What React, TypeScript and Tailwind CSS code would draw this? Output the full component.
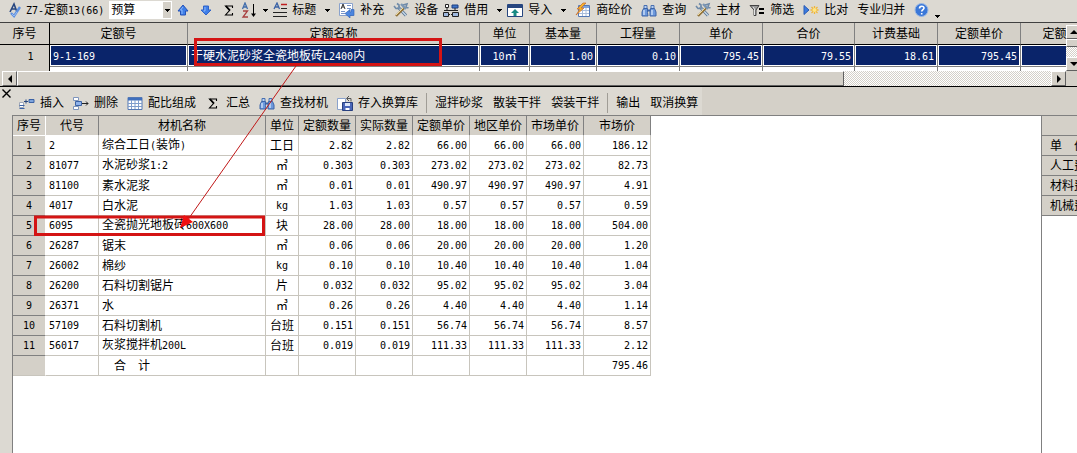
import { Fragment, ReactNode } from "react";

const checker =
  "bg-[repeating-conic-gradient(#ffffff_0_25%,#d4d0c8_0_50%)] bg-[length:2px_2px]";
const raised =
  "flex items-center justify-center bg-[#d4d0c8] border border-t-white border-l-white border-r-[#606060] border-b-[#606060]";

// Latin runs are set in a narrow mono face so that they take half a CJK cell
const Txt = ({ children }: { children: string }) => (
  <span className="whitespace-pre">
    {children.split(/([\x20-\x7e]+)/).map((part, i) =>
      i % 2 ? (
        <span key={i} className="font-['DejaVu_Sans_Mono',monospace] text-[10px]">
          {part}
        </span>
      ) : (
        <Fragment key={i}>{part}</Fragment>
      )
    )}
  </span>
);

const Caret = () => (
  <svg width="5" height="3" viewBox="0 0 5 3" shapeRendering="crispEdges">
    <path d="M0 0h5L2.5 3z" />
  </svg>
);

const Triangle = ({ dir }: { dir: "left" | "right" | "up" | "down" }) => {
  const d = {
    left: "M6 0v8L2 4z",
    right: "M2 0v8l4-4z",
    up: "M0 6h8L4 2z",
    down: "M0 2h8L4 6z",
  }[dir];
  return (
    <svg width="8" height="8" viewBox="0 0 8 8" className="shrink-0">
      <path d={d} />
    </svg>
  );
};

const Svg = ({ children, w = 16 }: { children: ReactNode; w?: number }) => (
  <svg width={w} height="16" viewBox={`0 0 ${w} 16`} fill="none" className="shrink-0">
    {children}
  </svg>
);

const SpellIcon = () => (
  <Svg w={14}>
    <path d="M2 10L6 2l3 8M4 7h4" stroke="#27467f" strokeWidth="1.6" />
    <path d="M3 11l3 3 6-9" stroke="#5b8fe0" strokeWidth="2.4" />
    <path d="M4 12l2 2 3-4" stroke="#9dbdf0" />
  </Svg>
);

const UpIcon = () => (
  <Svg w={12}>
    <path d="M6 3l5 6H8.500v4h-5V9H1z" fill="#3f7fe8" stroke="#2553b8" />
    <path d="M6 5L3.500 8H5v4" stroke="#8db8fa" />
  </Svg>
);

const DownIcon = () => (
  <Svg w={12}>
    <path d="M6 13l5-5H8.500V4h-5v4H1z" fill="#3f7fe8" stroke="#2f62c8" />
    <path d="M5 5v4H3.500" stroke="#8db8fa" />
  </Svg>
);

const SigmaIcon = ({ w = 12 }: { w?: number }) => (
  <Svg w={w}>
    <g transform={w > 12 ? "translate(2 0)" : undefined}>
      <path d="M9.500 6V4H2.500L6.500 8.500 2.500 13H9.500V11" stroke="#000" strokeWidth="1.100" />
      <path d="M3 4l4 4.500" stroke="#000" strokeWidth="1.800" />
    </g>
  </Svg>
);

const SortIcon = () => (
  <Svg>
    <path d="M2.500 7L5 1l2.500 6M3.500 5h3" stroke="#3f6cab" strokeWidth="1.300" />
    <path d="M3 9h4.500L3 15h5" stroke="#a84040" strokeWidth="1.300" />
    <path d="M13.500 2v11" stroke="#000" />
    <path d="M11 11.500h5l-2.500 3.500z" fill="#000" />
  </Svg>
);

const TitleIcon = () => (
  <Svg w={14}>
    <path d="M1 7l3-6 2.500 6M2.500 5h3" stroke="#3a62a5" strokeWidth="1.300" />
    <path d="M8 2.500h6" stroke="#c02020" strokeWidth="1.500" />
    <path d="M8 6.500h6M0 10.500h14M0 14.500h14" stroke="#222" />
  </Svg>
);

const SupplementIcon = () => (
  <Svg>
    <path d="M.5 1.500h13v12H.5z" fill="#fff" stroke="#8aa2cc" />
    <path d="M2 7l2-5 2 5M3 5h2" stroke="#333" />
    <path d="M8 3.500h4M8 6.500h4M2 9.500h4M2 11.500h4" stroke="#7793c8" />
    <path d="M12 7.500h3v6h-4v2.500L6 11.500 11 7.500V10h1z" fill="#4d86df" stroke="#2c5fb4" strokeWidth=".6" />
  </Svg>
);

const ToolsIcon = () => (
  <Svg>
    <path d="M5 5l8 8.500" stroke="#55708f" strokeWidth="3" />
    <path d="M5 5l8 8.500" stroke="#c9dbea" strokeWidth="1.400" />
    <path d="M1 4l2 2.500h3V3L4 1.500M10 3l4-1-1 3 2.500 1" stroke="#6f8aa8" strokeWidth="1.600" />
    <path d="M11 6l-8 8" stroke="#93743c" strokeWidth="2.400" />
    <path d="M10 6l-7 7" stroke="#ecd9a0" />
    <path d="M8 2l5 5" stroke="#7b96b4" strokeWidth="2.400" />
  </Svg>
);

const BorrowIcon = () => (
  <Svg>
    <path d="M2.500 2.500h3v3h-3z" fill="#fff" stroke="#222" />
    <path d="M9 3h6v3H9z" fill="#3e74c8" stroke="#1c3e80" />
    <path d="M4 6v3M12 6v3M1 8.500h14" stroke="#222" />
    <path d="M.5 10.500h5v4h-5zM9.500 10.500h6v4h-6z" fill="#9fb9df" stroke="#222" />
    <path d="M6 12.500h3" stroke="#222" strokeDasharray="1 1" />
  </Svg>
);

const ImportIcon = () => (
  <Svg>
    <path d="M.5 2.500h15v12H.5z" fill="#fff" stroke="#27467f" />
    <path d="M1 3h14v3H1z" fill="#27467f" />
    <path d="M8 7l4 4H9.500v3h-3v-3H4z" fill="#188a83" />
  </Svg>
);

const PriceIcon = () => (
  <Svg>
    <path d="M3.500 3.500h11v11h-11z" fill="#fff" stroke="#5478b4" />
    <path d="M4 4h10v2H4z" fill="#7ea4dc" />
    <path d="M4 8.500h10M4 11.500h10M7.500 6v8M11 6v8" stroke="#a9bddc" />
    <path d="M8 1L2 7h3l-4 6 8-7H6l5-5z" fill="#f5b52c" stroke="#c8682a" strokeWidth=".7" />
  </Svg>
);

const FindIcon = () => (
  <Svg>
    <path d="M3 3.500h3v3H3zM10 3.500h3v3h-3z" fill="#b8d0f2" stroke="#4a70b0" />
    <path d="M2.500 6.500h4v4l.5 3.500H1v-4zM9.500 6.500h4L15 10v4H9v-4z" fill="#6c98dc" stroke="#3c64a8" />
    <path d="M6.500 8.500h3" stroke="#3c64a8" strokeWidth="2" />
    <path d="M3 8v5M11 8v5" stroke="#d6e5fb" strokeWidth="1.300" />
  </Svg>
);

const FilterIcon = () => (
  <Svg>
    <path d="M1 3.500h9L7 8v5.500H5V8z" fill="#999" stroke="#444" />
    <path d="M4 5l1.500 2v6" stroke="#e5e5e5" />
    <path d="M10 7h5M10 11h5" stroke="#000" strokeWidth="2" />
  </Svg>
);

const CompareIcon = () => (
  <Svg>
    <path d="M1 3.500v9L6 8z" fill="#3b7be0" stroke="#2a5cb4" />
    <path d="M11.500 4v8M7.500 8h8M8.500 5l6 6M14.500 5l-6 6" stroke="#f0b63a" strokeWidth="1.300" />
    <circle cx="11.500" cy="8" r="2" fill="#ffe684" />
  </Svg>
);

const HelpIcon = () => (
  <Svg>
    <circle cx="7.500" cy="8" r="6.500" fill="#3b78d8" stroke="#9ab8e4" />
    <path d="M5.500 6.500c0-3 4.500-3 4.500-.5 0 1.500-2.300 1.600-2.300 3.500M7.700 11v1.500" stroke="#fff" strokeWidth="1.600" />
  </Svg>
);

const InsertIcon = () => (
  <Svg>
    <path d="M10 4.500h5v3h-5z" fill="#7ea4dc" stroke="#3b62a5" />
    <path d="M5 6.500h4M7 4.500v4" stroke="#27467f" />
    <path d="M.5 7.500h4v5h-4z" fill="#fff" stroke="#a0a8b8" />
    <path d="M.5 10.500h5M.5 13.500h5" stroke="#3b62a5" />
  </Svg>
);

const DeleteIcon = () => (
  <Svg>
    <path d="M.5 2.500h5v3h-5zM.5 11.500h5v3h-5z" fill="#fff" stroke="#7e95bd" />
    <path d="M2.500 6.500h6v4h-6z" fill="#8fb2ea" stroke="#3b62a5" />
    <path d="M9 8.500h6M13 6.500l2 2-2 2" stroke="#222" />
  </Svg>
);

const GridIcon = () => (
  <Svg>
    <path d="M1 2.500h14v12H1z" fill="#fff" stroke="#5478b4" />
    <path d="M1 3h14v2.500H1z" fill="#3f6fbd" />
    <path d="M1 8.500h14M1 11.500h14M4.500 5v9M8 5v9M11.500 5v9" stroke="#7f9dcc" />
  </Svg>
);

const SaveIcon = () => (
  <Svg>
    <path d="M.5 3.500h8v11h-8z" fill="#fff" stroke="#8aa2cc" />
    <path d="M5.500 7.500h10v8h-10z" fill="#4a66b8" stroke="#28407f" />
    <path d="M8 8h5v3H8z" fill="#dce6f8" />
    <path d="M8.500 13h4v2h-4z" fill="#fff" />
    <path d="M10 3.500h4v3M12 1l-2.500 2.500L12 6" stroke="#555" />
  </Svg>
);

type ToolProps = {
  icon?: ReactNode;
  label?: string;
  caret?: boolean;
  title?: string;
};

const Tool = ({ icon, label, caret, title }: ToolProps) => (
  <button
    type="button"
    aria-label={label ?? title}
    className="flex shrink-0 items-center gap-[5px] whitespace-nowrap"
  >
    {icon}
    {label && <span>{label}</span>}
    {caret && (
      <span className={label ? "ml-1" : "ml-0.5"}>
        <Caret />
      </span>
    )}
  </button>
);

const quotaColumns = [
  { name: "序号", width: "w-[50px]" },
  { name: "定额号", width: "w-[138px]" },
  { name: "定额名称", width: "w-[292px]" },
  { name: "单位", width: "w-[50px]" },
  { name: "基本量", width: "w-[67px]" },
  { name: "工程量", width: "w-[83px]" },
  { name: "单价", width: "w-[83px]" },
  { name: "合价", width: "w-[92px]" },
  { name: "计费基础", width: "w-[83px]" },
  { name: "定额单价", width: "w-[83px]" },
  { name: "定额合价", width: "w-[92px]" },
];

const quotaRow = ["9-1-169", "干硬水泥砂浆全瓷地板砖L2400内", "10㎡", "1.00", "0.10", "795.45", "79.55", "18.61", "795.45", ""];

const materialColumns = [
  { name: "序号", width: "w-[33px]" },
  { name: "代号", width: "w-[53px]" },
  { name: "材机名称", width: "w-[167px]" },
  { name: "单位", width: "w-[33px]" },
  { name: "定额数量", width: "w-[57px]" },
  { name: "实际数量", width: "w-[57px]" },
  { name: "定额单价", width: "w-[57px]" },
  { name: "地区单价", width: "w-[57px]" },
  { name: "市场单价", width: "w-[57px]" },
  { name: "市场价", width: "w-[67px]" },
];

const materials = [
  ["2", "综合工日(装饰)", "工日", "2.82", "66.00", "186.12"],
  ["81077", "水泥砂浆1:2", "㎥", "0.303", "273.02", "82.73"],
  ["81100", "素水泥浆", "㎥", "0.01", "490.97", "4.91"],
  ["4017", "白水泥", "kg", "1.03", "0.57", "0.59"],
  ["6095", "全瓷抛光地板砖600X600", "块", "28.00", "18.00", "504.00"],
  ["26287", "锯末", "㎥", "0.06", "20.00", "1.20"],
  ["26002", "棉纱", "kg", "0.10", "10.40", "1.04"],
  ["26200", "石料切割锯片", "片", "0.032", "95.02", "3.04"],
  ["26371", "水", "㎥", "0.26", "4.40", "1.14"],
  ["57109", "石料切割机", "台班", "0.151", "56.74", "8.57"],
  ["56017", "灰浆搅拌机200L", "台班", "0.019", "111.33", "2.12"],
];

const MainToolbar = () => (
  <div className="flex h-[22px] items-center gap-[5px] overflow-hidden bg-[#dcd9d2] pb-0.5 pl-2">
    <label htmlFor="kind" className="flex shrink-0 items-center gap-1">
      <SpellIcon />
      <Txt>Z7-定额13(66)</Txt>
    </label>
    <div className="relative shrink-0">
      <select id="kind" className="block h-[18px] w-[63px] appearance-none bg-white pl-0.5 leading-4">
        <option>预算</option>
      </select>
      <span className="pointer-events-none absolute inset-y-px right-px flex w-2 items-center justify-center bg-[#d4d0c8]">
        <Caret />
      </span>
    </div>
    <div className="flex shrink-0 gap-[11px]">
      <Tool icon={<UpIcon />} title="上移" />
      <Tool icon={<DownIcon />} title="下移" />
      <Tool icon={<SigmaIcon />} title="合计" />
    </div>
    <Tool icon={<SortIcon />} title="排序" caret />
    <div className="flex shrink-0 gap-[9px]">
      <Tool icon={<TitleIcon />} label="标题" caret />
      <Tool icon={<SupplementIcon />} label="补充" />
      <Tool icon={<ToolsIcon />} label="设备" />
    </div>
    <Tool icon={<BorrowIcon />} label="借用" caret />
    <div className="flex shrink-0 gap-[9px]">
      <Tool icon={<ImportIcon />} label="导入" caret />
      <Tool icon={<PriceIcon />} label="商砼价" />
      <Tool icon={<FindIcon />} label="查询" />
      <Tool icon={<ToolsIcon />} label="主材" />
      <Tool icon={<FilterIcon />} label="筛选" />
      <Tool icon={<CompareIcon />} label="比对" />
      <Tool label="专业归并" />
      <Tool icon={<HelpIcon />} title="帮助" />
    </div>
    <span className="self-end pb-0.5">
      <Caret />
    </span>
  </div>
);

const QuotaGrid = () => (
  <section className="border-t border-[#404040] bg-[#d4d0c8]">
    <div className="flex h-12">
      <div className="min-w-0 flex-1 overflow-hidden bg-white">
        <table className="w-[1113px] table-fixed border-separate border-spacing-0">
          <thead>
            <tr className="h-[22px] bg-[#d4d0c8]">
              {quotaColumns.map((c) => (
                <th key={c.name} className={`${c.width} border-r border-b border-r-[#808080] border-b-black p-0 font-normal first:border-r-black`}>
                  {c.name}
                </th>
              ))}
            </tr>
          </thead>
          <tbody>
            <tr className="h-[22px]">
              <td className="border-r border-black bg-[#d4d0c8] p-0 pl-3 text-center">
                <Txt>1</Txt>
              </td>
              {quotaRow.map((v, i) => (
                <td key={i} className="border-r border-b border-[#808080] p-0">
                  <div
                    className={`h-[21px] border border-white bg-[#0a246a] px-0.5 leading-5 text-white ${
                      i < 2 ? "text-left" : i === 2 ? "text-center" : "text-right"
                    }`}
                  >
                    <Txt>{v}</Txt>
                  </div>
                </td>
              ))}
            </tr>
            <tr className="h-1">
              {quotaColumns.map((c) => (
                <td key={c.name} className="border-r border-[#808080] p-0 first:border-black first:bg-[#d4d0c8]" />
              ))}
            </tr>
          </tbody>
        </table>
      </div>
      <div className="flex w-[11px] shrink-0 flex-col overflow-hidden pt-0.5">
        <button type="button" aria-label="向上滚动" className={`h-[14px] w-4 ${raised}`}>
          <Triangle dir="up" />
        </button>
        <div className={`h-2 w-4 ${raised}`} />
        <div className={`flex-1 ${checker}`} />
        <button type="button" aria-label="向下滚动" className={`h-[14px] w-4 ${raised}`}>
          <Triangle dir="down" />
        </button>
      </div>
    </div>
    <div className="flex h-[15px] pl-0.5">
      <button type="button" aria-label="向左滚动" className={`w-[15px] shrink-0 ${raised}`}>
        <Triangle dir="left" />
      </button>
      <div className={`min-w-0 flex-1 ${checker}`}>
        <div className={`h-full w-4/5 ${raised}`} />
      </div>
      <button type="button" aria-label="向右滚动" className={`w-[15px] shrink-0 ${raised}`}>
        <Triangle dir="right" />
      </button>
      <div className="w-[11px] shrink-0" />
    </div>
  </section>
);

const Divider = () => <span className="h-5 w-px shrink-0 bg-[#a09d96]" />;

const DetailToolbar = () => (
  <div className="flex h-7 items-start bg-[#d4d0c8]">
    <div className="flex h-7 shrink-0 items-start gap-2 bg-[#dcd9d2] pr-1">
      <button type="button" aria-label="关闭" className="mt-0.5 ml-0.5">
        <svg width="9" height="9" viewBox="0 0 9 9">
          <path d="M.5.5l8 8M8.500.5l-8 8" stroke="#000" strokeWidth="1.400" />
        </svg>
      </button>
      <div className="flex h-7 items-center gap-2 pt-1">
        <div className="flex gap-[9px]">
          <Tool icon={<InsertIcon />} label="插入" />
          <Tool icon={<DeleteIcon />} label="删除" />
          <Tool icon={<GridIcon />} label="配比组成" />
          <Tool icon={<SigmaIcon w={16} />} label="汇总" />
          <Tool icon={<FindIcon />} label="查找材机" />
          <Tool icon={<SaveIcon />} label="存入换算库" />
        </div>
        <Divider />
        <div className="flex gap-[10px]">
          <Tool label="湿拌砂浆" />
          <Tool label="散装干拌" />
          <Tool label="袋装干拌" />
        </div>
        <Divider />
        <div className="flex gap-[10px]">
          <Tool label="输出" />
          <Tool label="取消换算" />
        </div>
      </div>
    </div>
  </div>
);

const MaterialTable = () => (
  <table className="w-[638px] table-fixed border-separate border-spacing-0">
    <thead>
      <tr className="h-5 bg-[#d4d0c8]">
        {materialColumns.map((c) => (
          <th key={c.name} className={`${c.width} border-r border-b border-r-[#808080] border-b-white p-0 font-normal whitespace-nowrap first:border-r-white`}>
            {c.name}
          </th>
        ))}
      </tr>
    </thead>
    <tbody>
      {materials.map(([code, name, unit, amount, price, total], i) => (
        <tr key={code} className="h-5">
          <td className="border-r border-b border-r-white border-b-[#808080] bg-[#d4d0c8] p-0 text-center">
            <Txt>{String(i + 1)}</Txt>
          </td>
          {[code, name, unit, amount, amount, price, price, price, total].map((v, j) => (
            <td
              key={j}
              className={`border-r border-b border-[#c8c5bd] p-0 whitespace-nowrap ${
                j < 2 ? "pl-[3px] text-left" : j === 2 ? "text-center" : "pr-0.5 text-right"
              }`}
            >
              <Txt>{v}</Txt>
            </td>
          ))}
        </tr>
      ))}
      <tr className="h-5">
        <td className="border-r border-b border-r-white border-b-[#c8c5bd] bg-[#d4d0c8] p-0" />
        <td className="border-r border-b border-[#c8c5bd] p-0" />
        <td className="border-r border-b border-[#c8c5bd] p-0 pl-[15px]">合　计</td>
        {[3, 4, 5, 6, 7, 8].map((n) => (
          <td key={n} className="border-r border-b border-[#c8c5bd] p-0" />
        ))}
        <td className="border-r border-b border-[#c8c5bd] p-0 pr-0.5 text-right">
          <Txt>795.46</Txt>
        </td>
      </tr>
    </tbody>
  </table>
);

const CostPanel = () => (
  <aside className="w-9 shrink-0 overflow-hidden border-t border-l border-[#808080] bg-white">
    <table className="w-[120px] border-separate border-spacing-0">
      <tbody>
        {["", "单　价", "人工费", "材料费", "机械费"].map((t) => (
          <tr key={t} className="h-5">
            <th className="border-b border-[#808080] bg-[#d4d0c8] p-0 pl-2 text-left font-normal">{t}</th>
          </tr>
        ))}
      </tbody>
    </table>
  </aside>
);

// Red frames on the two tile names and the arrow that ties them
const Annotations = () => (
  <svg className="pointer-events-none absolute top-0 left-0" width="460" height="250" fill="none">
    <rect x="195.500" y="39.500" width="245" height="25" stroke="#d41414" strokeWidth="3" />
    <rect x="35.500" y="217" width="228" height="17.500" stroke="#d41414" strokeWidth="3" />
    <path d="M296 66L187 221" stroke="#c01818" strokeWidth="1" />
    <path d="M180 228l4-13 9 7z" fill="#f01010" />
  </svg>
);

export default function App() {
  return (
    <div className="relative flex min-h-screen flex-col overflow-hidden bg-[#d4d0c8] font-['Liberation_Sans','Noto_Sans_CJK_SC',sans-serif] text-[12px] leading-4 text-black">
      <MainToolbar />
      <QuotaGrid />
      <section className="flex flex-1 flex-col border-t border-black">
        <DetailToolbar />
        <div className="flex flex-1">
          <div className="w-3 shrink-0 bg-[#dcd9d2]" />
          <div className="min-w-0 flex-1 border-t border-l border-[#808080] bg-white">
            <MaterialTable />
          </div>
          <CostPanel />
        </div>
      </section>
      <Annotations />
    </div>
  );
}
